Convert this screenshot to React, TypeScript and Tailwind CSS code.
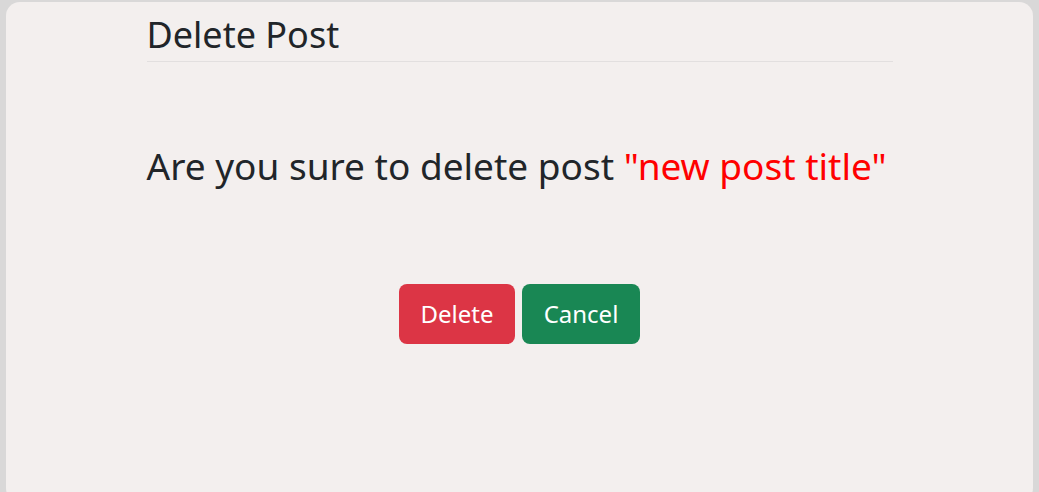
import React from 'react';

const DeletePost: React.FC = () => {
  const title = 'new post title';

  return (
    <div className="min-h-screen bg-[#d9d8d8] pt-[2px] px-[6px]">
      <div
        className="h-[500px] rounded-[14px] bg-[#f3efee] text-[#212529]"
        style={{ fontFamily: '"Noto Sans", "Open Sans", sans-serif' }}
      >
        <div className="mx-auto w-[746px]">
          <h2 className="pt-[10px] pb-[3px] text-[36px] leading-[46px] border-b border-[#e2dfdf]">
            Delete Post
          </h2>
          <p className="mt-[78px] text-[37px] leading-[52px]">
            Are you sure to delete post <span className="text-[#ff0000]">"{title}"</span>
          </p>
          <div className="mt-[92px] flex justify-center gap-[7px]">
            <button className="h-[60px] w-[116px] rounded-[8px] bg-[#dc3545] text-[24px] text-white">
              Delete
            </button>
            <button className="h-[60px] w-[118px] rounded-[8px] bg-[#198754] text-[24px] text-white">
              Cancel
            </button>
          </div>
        </div>
      </div>
    </div>
  );
};

export default function App() {
  return <DeletePost />;
}
